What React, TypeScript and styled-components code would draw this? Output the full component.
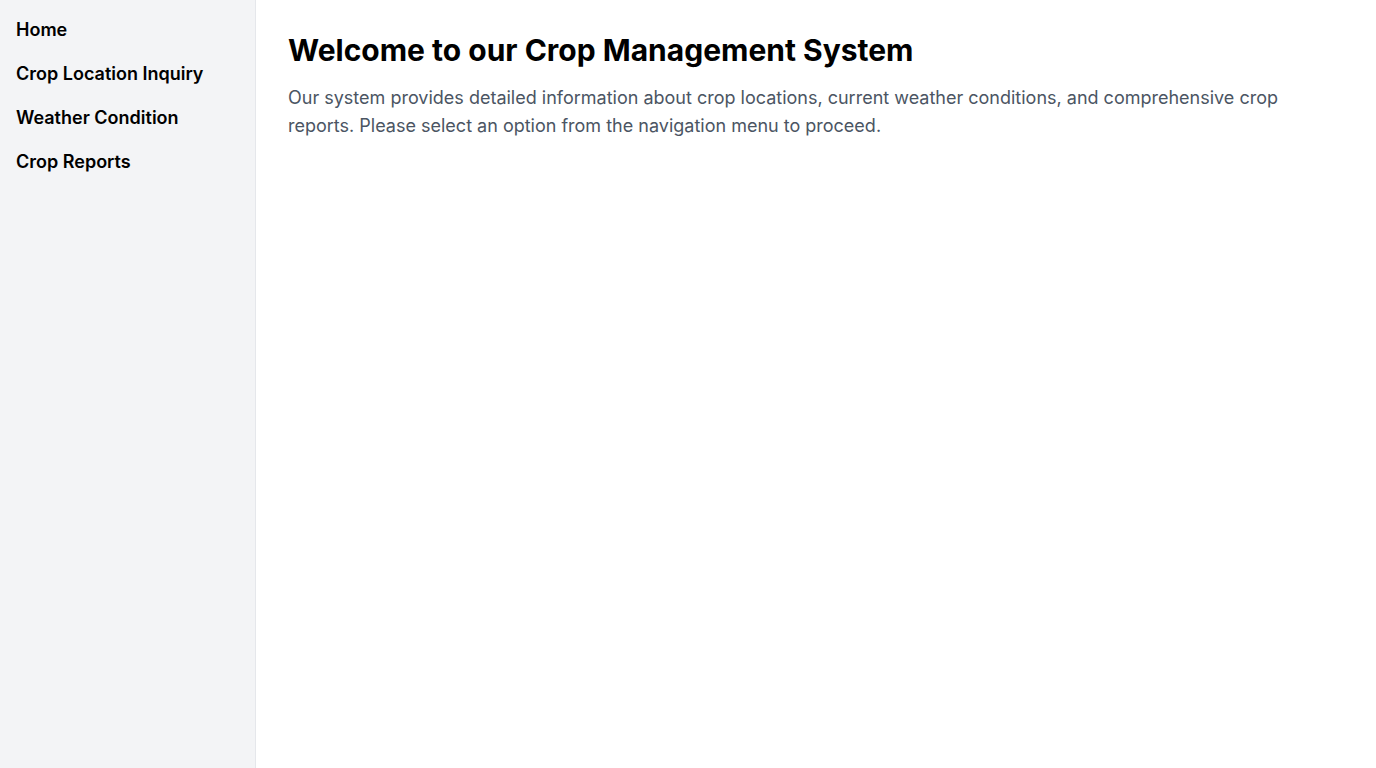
import React from "react";
import styled, { createGlobalStyle } from "styled-components";

const GlobalStyle = createGlobalStyle`
  html, body { margin: 0; padding: 0; }
  body { font-family: Inter, "Noto Sans", sans-serif; background: #ffffff; color: #000; }
  * { box-sizing: border-box; }
`;

const Layout = styled.div`
  display: flex;
  min-height: 100vh;
`;

const Sidebar = styled.nav`
  width: 256px;
  flex-shrink: 0;
  background: #f3f4f6;
  border-right: 1px solid #e5e7eb;
  padding: 16px;
`;

const NavList = styled.ul`
  list-style: none;
  margin: 0;
  padding: 0;
  display: flex;
  flex-direction: column;
  gap: 16px;
`;

const NavLink = styled.a`
  display: block;
  font-size: 18px;
  line-height: 28px;
  font-weight: 600;
  color: #000;
  text-decoration: none;
`;

const Main = styled.main`
  flex: 1;
  padding: 32px;
`;

const Title = styled.h1`
  margin: 0 0 16px;
  font-size: 30px;
  line-height: 36px;
  font-weight: 700;
  color: #000;
`;

const Lead = styled.p`
  margin: 0;
  font-size: 18px;
  line-height: 28px;
  color: #4b5563;
`;

const items = ["Home", "Crop Location Inquiry", "Weather Condition", "Crop Reports"];

export default function App() {
  return (
    <>
      <GlobalStyle />
      <Layout>
        <Sidebar>
          <NavList>
            {items.map((t) => (
              <li key={t}>
                <NavLink href="#">{t}</NavLink>
              </li>
            ))}
          </NavList>
        </Sidebar>
        <Main>
          <Title>Welcome to our Crop Management System</Title>
          <Lead>
            Our system provides detailed information about crop locations, current weather conditions, and
            comprehensive crop reports. Please select an option from the navigation menu to proceed.
          </Lead>
        </Main>
      </Layout>
    </>
  );
}
